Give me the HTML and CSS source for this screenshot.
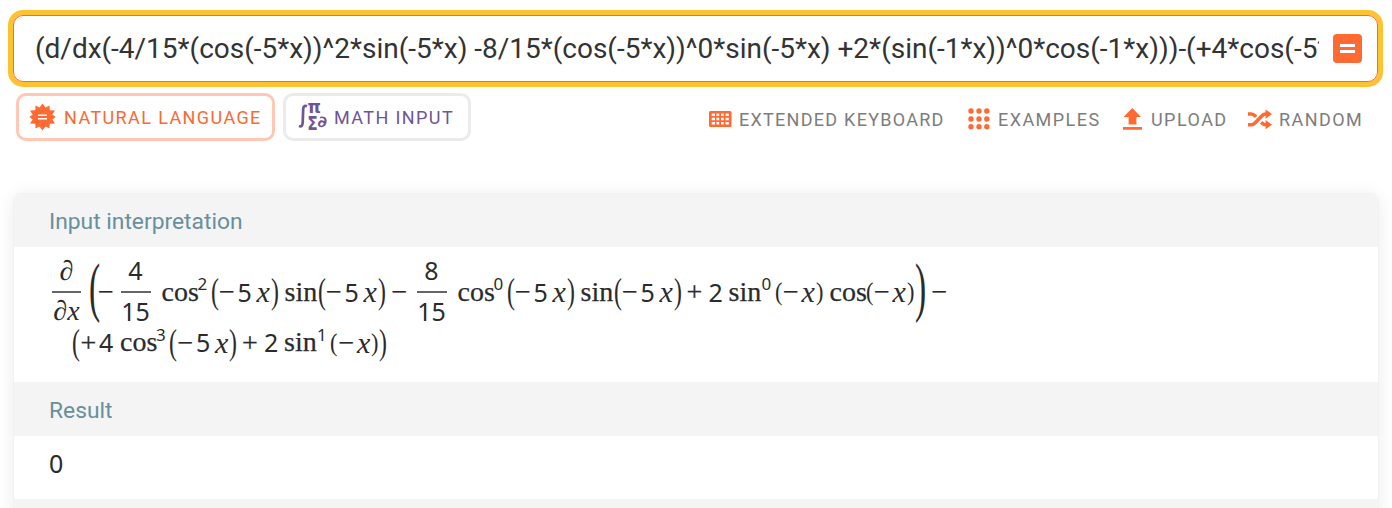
FILE: index.html
```
<!DOCTYPE html>
<html lang="en">
<head>
<meta charset="utf-8">
<title>Computation result</title>
<link rel="stylesheet" href="styles.css">
</head>
<body>
<main class="page">
  <form class="query">
    <div class="query-text">(d/dx(-4/15*(cos(-5*x))^2*sin(-5*x) -8/15*(cos(-5*x))^0*sin(-5*x) +2*(sin(-1*x))^0*cos(-1*x)))-(+4*cos(-5*</div>
    <button class="submit" type="button" aria-label="Compute">
      <svg width="29" height="29" viewBox="0 0 29 29"><path d="M7 10h15v3H7zM7 16h15v3H7z" fill="#fff"/></svg>
    </button>
  </form>

  <div class="toolbar">
    <div class="modes">
      <button class="mode mode-active" type="button">
        <svg class="mode-icon" width="28" height="28" viewBox="-13.5 -14 28 28">
          <path fill="#ff6a33" d="M0-13.5 3-9.5 7-11.5 7.2-6.8 12.5-6.5 9.8-2.4 13.2 0 9.8 2.4 12.5 6.5 7.2 6.8 7 11.5 3 9.5 0 13.5-3 9.5-7 11.5-7.2 6.8-12.5 6.5-9.8 2.4-13.2 0-9.8-2.4-12.5-6.5-7.2-6.8-7-11.5-3-9.5z"/>
          <path fill="#fff" d="M-4.5-2.4h9v1.5h-9zM-4.5.9h9v1.5h-9z"/>
        </svg>
        <span class="label natural">NATURAL LANGUAGE</span>
      </button>
      <button class="mode mode-math" type="button">
        <svg class="mode-icon" width="28" height="28" viewBox="0 0 28 28">
          <path d="M8 3.2C5.5 2.1 4.4 3.4 4.2 6L3.7 19.5C3.6 22.5 2.5 23.9 0 23" fill="none" stroke="#6e5597" stroke-width="2.7"/>
          <g class="glyphs">
            <text x="8.6" y="9.6" font-size="17" textLength="13.5" lengthAdjust="spacingAndGlyphs">π</text>
            <text x="8.3" y="27" font-size="19" textLength="10.5" lengthAdjust="spacingAndGlyphs">Σ</text>
            <text x="18.6" y="24.2" font-size="15.5" textLength="9.6" lengthAdjust="spacingAndGlyphs">∂</text>
          </g>
        </svg>
        <span class="label math-label">MATH INPUT</span>
      </button>
    </div>
    <nav class="tools">
      <a class="tool"><svg width="23" height="17" viewBox="0 0 23 17"><rect width="22.5" height="16" rx="1.5" fill="#ff6a33"/><path fill="#fff" d="M2.7 2.5H6V5H2.7zM7.5 2.5h2.7V5H7.5zM12 2.5h2.7V5H12zM16.5 2.5h3.3V5h-3.3zM2.7 6.7H6v2.5H2.7zM7.5 6.7h2.7v2.5H7.5zM12 6.7h2.7v2.5H12zM16.5 6.7h3.3v2.5h-3.3zM2.7 11H6v2.5H2.7zM7.5 11h2.7v2.5H7.5zM12 11h2.7v2.5H12zM16.5 11h3.3v2.5h-3.3z"/></svg><span class="label w-keyboard">EXTENDED KEYBOARD</span></a>
      <a class="tool dots"><svg width="22" height="22" viewBox="0 0 22 22" fill="#ff6a33"><circle cx="3" cy="3" r="2.7"/><circle cx="11" cy="3" r="2.7"/><circle cx="18.8" cy="3" r="2.7"/><circle cx="3" cy="11" r="2.7"/><circle cx="11" cy="11" r="2.7"/><circle cx="18.8" cy="11" r="2.7"/><circle cx="3" cy="18.8" r="2.7"/><circle cx="11" cy="18.8" r="2.7"/><circle cx="18.8" cy="18.8" r="2.7"/></svg><span class="label w-examples">EXAMPLES</span></a>
      <a class="tool up"><svg width="19" height="22" viewBox="0 0 19 22" fill="#ff6a33"><path d="M9.3 0 18 9h-4.6v7.4H5.6V9H.5zM0 19h19v2.8H0z"/></svg><span class="label w-upload">UPLOAD</span></a>
      <a class="tool"><svg width="24" height="19" viewBox="0 0 24 19"><path d="M0 14.8h3.2c1.6 0 2.6-.6 3.8-1.8l7-7.2C15.2 4.6 16 4 17.6 4H19M0 4h3.2C5 4 6 4.7 7.2 6l.8.9M13.2 12.2l.8.8c1.2 1.3 2 1.8 3.6 1.8H19" fill="none" stroke="#ff6a33" stroke-width="3.6"/><path fill="#ff6a33" d="M17.6-.4 24 4l-6.4 4.8zM17.6 10 24 14.8l-6.4 4.4z"/></svg><span class="label w-random">RANDOM</span></a>
    </nav>
  </div>

  <section class="results">
    <h2 class="pod-title">Input interpretation</h2>
    <div class="pod-body formula">
      <div class="row first">
        <span class="frac partial"><i class="top">∂</i><i class="bottom">∂x</i></span>
        <span class="big open">(</span><span class="op lead">−</span>
        <span class="frac"><b class="top">4</b><b class="bottom">15</b></span>
        <span class="fn cos">cos</span><span class="sup">2</span><span class="mid before">(</span><span class="op">−</span><b class="num">5</b><i class="var">x</i><span class="mid after">)</span>
        <span class="fn sin">sin</span><span class="mid before">(</span><span class="op">−</span><b class="num">5</b><i class="var">x</i><span class="mid after wide">)</span>
        <span class="op minus-frac">−</span>
        <span class="frac second"><b class="top">8</b><b class="bottom">15</b></span>
        <span class="fn cos">cos</span><span class="sup">0</span><span class="mid before">(</span><span class="op">−</span><b class="num">5</b><i class="var">x</i><span class="mid after">)</span>
        <span class="fn sin">sin</span><span class="mid before">(</span><span class="op">−</span><b class="num">5</b><i class="var">x</i><span class="mid after">)</span>
        <span class="op plus">+</span><b class="num two">2</b>
        <span class="fn sin">sin</span><span class="sup">0</span><span class="small before">(</span><span class="op tight">−</span><i class="var">x</i><span class="small after">)</span>
        <span class="fn cos">cos</span><span class="small before">(</span><span class="op tight">−</span><i class="var">x</i><span class="small last">)</span>
        <span class="big close">)</span><span class="op">−</span>
      </div>
      <div class="row next">
        <span class="mid before">(</span><span class="op">+</span><b class="num four">4</b>
        <span class="fn cos">cos</span><span class="sup">3</span><span class="mid before">(</span><span class="op">−</span><b class="num">5</b><i class="var">x</i><span class="mid after">)</span>
        <span class="op plus">+</span><b class="num two">2</b>
        <span class="fn sin">sin</span><span class="sup">1</span><span class="small before">(</span><span class="op tight">−</span><i class="var">x</i><span class="small last">)</span><span class="mid after">)</span>
      </div>
    </div>
    <h2 class="pod-title result-title">Result</h2>
    <div class="pod-body result"><b class="num">0</b></div>
    <div class="pod-title"></div>
  </section>
</main>
</body>
</html>
```
FILE: styles.css
```
* { box-sizing: border-box; }
body { margin: 0; height: 508px; overflow: hidden; background: #fff; font-family: Roboto, sans-serif; }
button { font: inherit; background: #fff; padding: 0; }
svg { display: block; flex: none; overflow: visible; }
.page { padding: 15px 13px 0; }

.query { display: flex; align-items: center; width: 1365px; height: 67px; padding: 0 15px 0 21px; border: 1px solid #f96932; border-radius: 10px; box-shadow: 0 0 0 5px #ffc230; }
.query-text { width: 1284px; overflow: hidden; white-space: nowrap; font-size: 28px; line-height: 40px; letter-spacing: -.015px; color: #333; }
.submit { width: 29px; height: 29px; margin-left: auto; border: 0; border-radius: 4px; background: #ff6a33; }

.toolbar { display: flex; justify-content: space-between; margin-top: 11px; padding: 0 16px 0 3px; height: 48px; }
.modes { display: flex; gap: 8px; }
.mode { display: flex; align-items: center; height: 48px; border: 3px solid #ebebeb; border-radius: 10px; }
.mode-active { width: 259px; border-color: #ffc7b4; color: #f96932; padding-left: 10px; }
.mode-math { width: 188px; color: #6e5597; padding-left: 13px; }
.mode-icon { margin-right: 7px; }
.glyphs { fill: #6e5597; font-family: "DejaVu Sans", sans-serif; font-weight: bold; }
.label { padding-top: 1px; font-size: 18px; letter-spacing: 1.4px; white-space: nowrap; line-height: 24px; }
.tools { display: flex; align-items: center; height: 52px; color: #7d7d7d; }
.tool { display: flex; align-items: center; gap: 7px; }
.dots { gap: 8px; }
.up { gap: 9px; }
.tools .label { letter-spacing: 1.27px; }
.w-keyboard { width: 229px; }
.w-examples { width: 125px; }
.w-upload { width: 97px; }
.w-random { width: 84px; }
.tools .w-examples, .tools .w-upload, .tools .w-random { letter-spacing: 1.45px; }

.results { width: 1366px; height: 330px; margin-top: 52px; border: 1px solid #f1f1f1; border-radius: 8px; overflow: hidden; box-shadow: 0 2px 18px rgba(0, 0, 0, .08); }
.pod-title { margin: 0; height: 54px; padding-left: 35px; background: #f4f4f4; color: #688f9d; font-weight: 400; font-size: 22.8px; line-height: 55px; }
.results > .pod-title:first-child { height: 53px; }
.results > .result-title { line-height: 57px; }

.formula { height: 135px; padding: 10px 0 0 38px; color: #2b2b2b; }
.formula, .result { font-family: "Liberation Serif", serif; }
.row { display: flex; align-items: center; line-height: 36px; white-space: nowrap; }
.first { height: 70px; }
.next { height: 31px; padding-left: 20px; }
.row > span, .row > i, .row > b { flex: none; }
.row > .fn, .row > .num { margin-top: -1px; }
.fn { font-size: 28px; -webkit-text-stroke: .25px #2b2b2b; }
.cos { width: 36px; }
.sin { width: 33px; }
.sup { width: 13px; font: 17px/20px "Noto Sans", sans-serif; transform: translateY(-8px); }
.num, .frac b { font-family: "Noto Sans", sans-serif; font-weight: 400; font-size: 25px; }
.num { width: 17px; text-indent: -1px; }
.var { width: 15px; font-size: 30px; text-indent: 1px; }
.op { width: 18.5px; font-size: 28px; text-indent: -1px; -webkit-text-stroke: .25px #2b2b2b; }
.plus { width: 22px; }
.two { width: 19px; }
.four { width: 20px; }
.tight { width: 16.5px; }
.mid, .small, .big { transform-origin: left center; }
.mid { font-size: 28px; transform: translateY(-1px) scale(.85, 1.3); }
.small { font-size: 28px; transform: scale(.8, .92); }
.big { font-size: 28px; transform: translateY(-4px) scale(1.2, 2.35); }
.before { width: 9.5px; }
.after { width: 14px; }
.wide { width: 15px; }
.last { width: 8px; }
.open { width: 10px; }
.close { width: 18px; }
.lead { width: 21.5px; }
.minus-frac { width: 24px; }
.frac { display: flex; flex-direction: column; width: 30px; height: 70px; margin-right: 11px; text-align: center; }
.frac .top { height: 36px; line-height: 27px; border-bottom: 2px solid #666; }
.frac .bottom { height: 34px; line-height: 36px; }
.partial { width: 29px; margin-right: 8px; }
.partial i { font-size: 28px; }
.result { height: 63px; padding: 9px 0 0 35px; color: #2b2b2b; }
.result .num { line-height: 37px; }
```
